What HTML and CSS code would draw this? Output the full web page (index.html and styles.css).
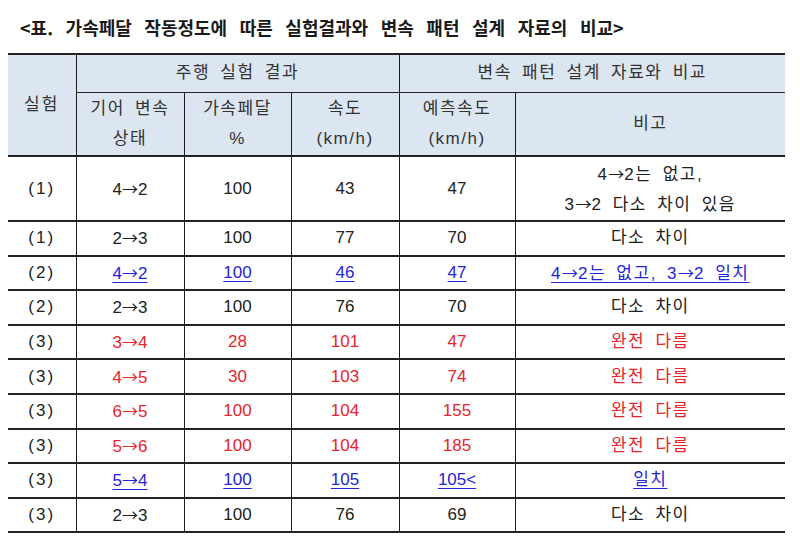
FILE: index.html
```html
<!DOCTYPE html>
<html lang="ko">
<head>
<meta charset="utf-8">
<title>가속페달 작동정도에 따른 실험결과와 변속 패턴 설계 자료의 비교</title>
<link rel="stylesheet" href="styles.css">
</head>
<body>
<div class="title">&lt;표. 가속페달 작동정도에 따른 실험결과와 변속 패턴 설계 자료의 비교&gt;</div>
<table class="cmp">
  <colgroup>
    <col class="c1"><col class="c2"><col class="c3"><col class="c4"><col class="c5"><col class="c6">
  </colgroup>
  <thead>
    <tr class="h1">
      <th rowspan="2" class="first">실험</th>
      <th colspan="3">주행 실험 결과</th>
      <th colspan="2" class="last">변속 패턴 설계 자료와 비교</th>
    </tr>
    <tr class="h2">
      <th>기어 변속<br>상태</th>
      <th>가속페달<br>%</th>
      <th>속도<br>(km/h)</th>
      <th>예측속도<br>(km/h)</th>
      <th class="last">비고</th>
    </tr>
  </thead>
  <tbody>
    <tr class="tall">
      <td class="first">(1)</td><td>4<span class="ar">→</span>2</td><td>100</td><td>43</td><td>47</td>
      <td class="last">4<span class="ar">→</span>2는 없고,<br>3<span class="ar">→</span>2 다소 차이 있음</td>
    </tr>
    <tr>
      <td class="first">(1)</td><td>2<span class="ar">→</span>3</td><td>100</td><td>77</td><td>70</td><td class="last">다소 차이</td>
    </tr>
    <tr class="blue">
      <td class="first">(2)</td><td><u>4<span class="ar">→</span>2</u></td><td><u>100</u></td><td><u>46</u></td><td><u>47</u></td><td class="last"><u>4<span class="ar">→</span>2는 없고, 3<span class="ar">→</span>2 일치</u></td>
    </tr>
    <tr>
      <td class="first">(2)</td><td>2<span class="ar">→</span>3</td><td>100</td><td>76</td><td>70</td><td class="last">다소 차이</td>
    </tr>
    <tr class="red">
      <td class="first">(3)</td><td>3<span class="ar">→</span>4</td><td>28</td><td>101</td><td>47</td><td class="last">완전 다름</td>
    </tr>
    <tr class="red">
      <td class="first">(3)</td><td>4<span class="ar">→</span>5</td><td>30</td><td>103</td><td>74</td><td class="last">완전 다름</td>
    </tr>
    <tr class="red">
      <td class="first">(3)</td><td>6<span class="ar">→</span>5</td><td>100</td><td>104</td><td>155</td><td class="last">완전 다름</td>
    </tr>
    <tr class="red">
      <td class="first">(3)</td><td>5<span class="ar">→</span>6</td><td>100</td><td>104</td><td>185</td><td class="last">완전 다름</td>
    </tr>
    <tr class="blue">
      <td class="first">(3)</td><td><u>5<span class="ar">→</span>4</u></td><td><u>100</u></td><td><u>105</u></td><td><u>105&lt;</u></td><td class="last"><u>일치</u></td>
    </tr>
    <tr>
      <td class="first">(3)</td><td>2<span class="ar">→</span>3</td><td>100</td><td>76</td><td>69</td><td class="last">다소 차이</td>
    </tr>
  </tbody>
</table>
</body>
</html>
```
FILE: styles.css
```css
html, body {
  background: #ffffff;
}
body {
  margin: 0;
  padding: 0 8px;
  font-family: "Liberation Sans", "Noto Sans CJK KR", sans-serif;
  color: #222222;
}
.title {
  font-family: "Noto Sans CJK KR", sans-serif;
  font-weight: bold;
  font-size: 18px;
  line-height: 22px;
  word-spacing: 7.5px;
  padding: 16px 0 0 12px;
  height: 37px;
  box-sizing: border-box;
  color: #1a1a1a;
  white-space: nowrap;
}
.cmp {
  border-collapse: collapse;
  table-layout: fixed;
  width: 777px;
  margin-top: 16px;
  font-size: 17px;
}
.c1 { width: 68px; }
.c2 { width: 108px; }
.c3 { width: 107px; }
.c4 { width: 108px; }
.c5 { width: 116px; }
.c6 { width: 270px; }
.cmp th, .cmp td {
  text-align: center;
  vertical-align: middle;
  padding: 0;
  border-left: 1px solid #1e1e1e;
  border-right: 1px solid #1e1e1e;
  border-top: 2px solid #222222;
  border-bottom: 2px solid #222222;
  word-spacing: 4px;
}
.cmp .first { border-left: none; letter-spacing: 2px; }
.cmp .last { border-right: none; }
.cmp th {
  background: #dce6f1;
  font-weight: normal;
  color: #333333;
  line-height: 30px;
  letter-spacing: 1.5px;
}
.cmp thead tr.h1 th:not(.first) {
  border-bottom-width: 1px;
}
.cmp thead tr.h2 th {
  border-top-width: 1px;
}
.h1 { height: 38px; }
.h1 th { line-height: 36px; }
.h2 { height: 64px; }
.cmp td {
  height: 32.6px;
  line-height: 28px;
}
.cmp td.last {
  letter-spacing: 1.5px;
}
.cmp tr.tall td {
  height: 63px;
}
.ar {
  font-family: "Noto Sans CJK KR", sans-serif;
  letter-spacing: 0;
  font-size: 16px;
}
.red td { color: #e8242c; }
.red td.first { color: #222222; }
.blue td { color: #2424d8; }
.blue td.first { color: #222222; }
.blue u {
  text-decoration-thickness: 1px;
  text-underline-offset: 3px;
}
```
